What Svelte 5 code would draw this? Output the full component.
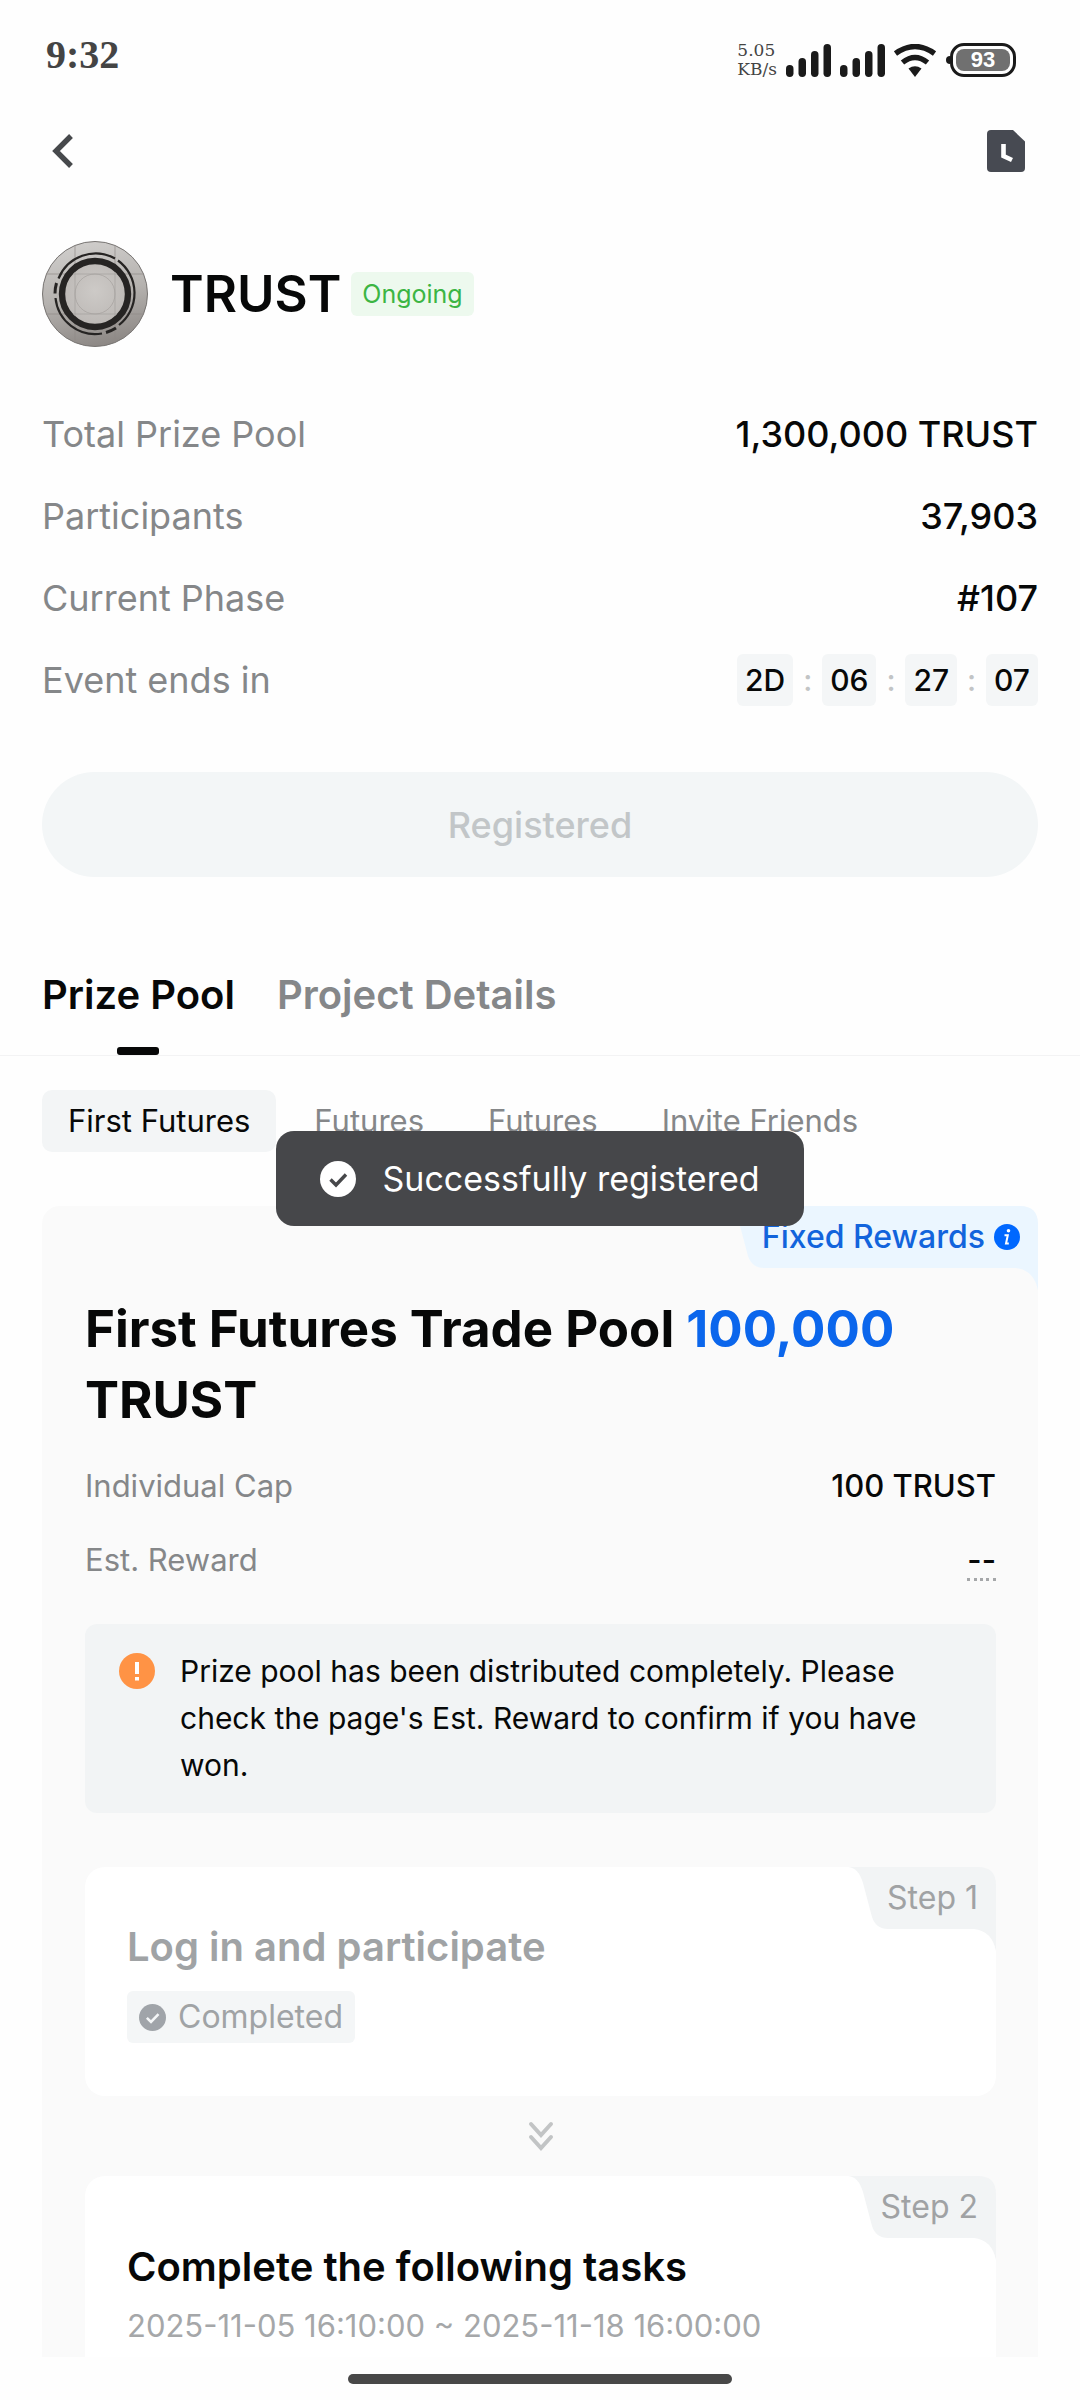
<script>
  let activeTab = $state('Prize Pool')
  let activePool = $state(0)

  const tabs = ['Prize Pool', 'Project Details']
  const pools = ['First Futures', 'Futures', 'Futures', 'Invite Friends']
  const stats = [
    { label: 'Total Prize Pool', value: '1,300,000 TRUST' },
    { label: 'Participants', value: '37,903' },
    { label: 'Current Phase', value: '#107' }
  ]
  const countdown = ['2D', '06', '27', '07']
  const bars = [12, 19, 26, 33]
</script>

{#snippet signal()}
  <svg class="signal" width="45" height="33" viewBox="0 0 45 33" aria-hidden="true">
    {#each bars as h, i}
      <rect x={i * 12.5} y={33 - h} width="7.5" height={h} rx="3.7" fill="#1a1a1a" />
    {/each}
  </svg>
{/snippet}

{#snippet check(size, disc, tick)}
  <svg width={size} height={size} viewBox="0 0 36 36" aria-hidden="true">
    <circle cx="18" cy="18" r="18" fill={disc} />
    <path d="M10.5 18.5 L16 24 L26 13.5" fill="none" stroke={tick} stroke-width="3.4" />
  </svg>
{/snippet}

<!-- notch in the top right corner of a card, w is the full width -->
{#snippet notch(w, fill)}
  <svg class="notch" width={w} height="84" viewBox="0 0 {w} 84" aria-hidden="true">
    <path
      d="M0 0 C8 1 12 6 15 16 L24 50 Q28 62 40 62 H{w - 22} Q{w - 4} 64 {w} 84 V18 Q{w} 0 {w - 18} 0 Z"
      {fill} />
  </svg>
{/snippet}

<div class="page">
  <div class="status-bar">
    <span class="time">9:32</span>
    <div class="indicators">
      <span class="speed">5.05<br />KB/s</span>
      {@render signal()}
      {@render signal()}
      <svg class="wifi" width="42" height="33" viewBox="0 0 42 33" aria-hidden="true">
        <g fill="none" stroke="#1a1a1a" stroke-width="5.4">
          <path d="M1.5 9.5 Q21 -4.5 40.5 9.5" />
          <path d="M8.5 18.5 Q21 8.5 33.5 18.5" />
        </g>
        <path d="M14.5 24.5 Q21 20 27.5 24.5 L21 33 Z" fill="#1a1a1a" />
      </svg>
      <div class="battery"><span>93</span></div>
    </div>
  </div>

  <header class="nav">
    <button class="icon-btn" aria-label="Back">
      <svg width="22" height="36" viewBox="0 0 22 36">
        <path d="M19 3 L4 18 L19 33" fill="none" stroke="#47494c" stroke-width="5.4" />
      </svg>
    </button>
    <button class="icon-btn" aria-label="History">
      <svg width="38" height="42" viewBox="0 0 38 42">
        <path d="M4 0 H26 L38 11.5 V38 Q38 42 34 42 H4 Q0 42 0 38 V4 Q0 0 4 0 Z" fill="#474a52" />
        <path d="M16.5 14 V26 L25 30" fill="none" stroke="#fff" stroke-width="4.6" />
      </svg>
    </button>
  </header>

  <main>
    <section class="project">
      <svg width="106" height="106" viewBox="0 0 106 106" aria-hidden="true">
        <defs>
          <linearGradient id="metal" x1="0.4" y1="0" x2="0.6" y2="1">
            <stop offset="0" stop-color="#cfcdcb" />
            <stop offset="0.5" stop-color="#b5b2af" />
            <stop offset="1" stop-color="#8b8683" />
          </linearGradient>
          <radialGradient id="face" cx="0.5" cy="0.45" r="0.6">
            <stop offset="0" stop-color="#cdcac7" />
            <stop offset="1" stop-color="#bab6b3" />
          </radialGradient>
        </defs>
        <circle cx="53" cy="53" r="52.5" fill="url(#metal)" stroke="#777472" />
        <g stroke="#8f8b88" stroke-width="0.7" fill="none">
          <path d="M33 4 V102 M73 4 V102 M4 33 H102 M4 73 H102" />
        </g>
        <circle cx="53" cy="53" r="33" fill="url(#face)" stroke="#262423" stroke-width="6.4" />
        <g stroke="#a5a19e" stroke-width="0.7" fill="none">
          <circle cx="53" cy="53" r="20" />
          <path d="M33 31 V75 M73 31 V75 M31 33 H75 M31 73 H75" />
        </g>
        <g fill="none" stroke="#262423" stroke-width="2.2">
          <path d="M16.5 37.5 A40 40 0 0 1 73 17.5" />
          <path d="M76 19.5 A40.5 40.5 0 0 1 77 84" />
          <path d="M13.5 57 A40 40 0 0 0 60 92.5" />
          <path d="M14.5 42 A40 40 0 0 0 13 52.5" stroke-width="3" />
          <path d="M64 91.5 A40 40 0 0 0 74 87" stroke-width="3" />
        </g>
      </svg>
      <h1>TRUST</h1>
      <span class="badge">Ongoing</span>
    </section>

    <dl class="stats">
      {#each stats as stat}
        <div class="row">
          <dt>{stat.label}</dt>
          <dd>{stat.value}</dd>
        </div>
      {/each}
      <div class="row">
        <dt>Event ends in</dt>
        <dd class="countdown">
          {#each countdown as part, i}
            {#if i > 0}<span class="colon">:</span>{/if}
            <span class="unit">{part}</span>
          {/each}
        </dd>
      </div>
    </dl>

    <button class="registered" disabled>Registered</button>
  </main>

  <nav class="tabs">
    {#each tabs as tab}
      <button class:active={activeTab === tab} onclick={() => (activeTab = tab)}>{tab}</button>
    {/each}
  </nav>

  <div class="pills">
    {#each pools as pool, i}
      <button class:active={activePool === i} onclick={() => (activePool = i)}>{pool}</button>
    {/each}
  </div>

  <section class="pool">
    {@render notch(314, '#ebf6ff')}
    <div class="corner fixed">
      <span>Fixed Rewards</span>
      <svg width="26" height="26" viewBox="0 0 26 26" aria-hidden="true">
        <circle cx="13" cy="13" r="13" fill="#0068ff" />
        <circle cx="14.5" cy="6.8" r="1.8" fill="#fff" />
        <path d="M10.5 11.2 H13.8 L12 19.5 H14.8" fill="none" stroke="#fff" stroke-width="2" />
      </svg>
    </div>

    <h2>First Futures Trade Pool <em>100,000</em> TRUST</h2>

    <dl class="details">
      <div class="row">
        <dt>Individual Cap</dt>
        <dd>100 TRUST</dd>
      </div>
      <div class="row">
        <dt>Est. Reward</dt>
        <dd><span class="hint">--</span></dd>
      </div>
    </dl>

    <div class="notice">
      <svg width="36" height="36" viewBox="0 0 36 36" aria-hidden="true">
        <circle cx="18" cy="18" r="18" fill="#ff9345" />
        <path d="M18 9 V21 M18 24 V27.5" stroke="#fff" stroke-width="4" />
      </svg>
      <p>Prize pool has been distributed completely. Please check the page's Est. Reward to confirm if you have won.</p>
    </div>

    <article class="step done">
      {@render notch(148, '#f2f4f5')}
      <span class="corner">Step 1</span>
      <h3>Log in and participate</h3>
      <span class="completed">
        {@render check(27, '#a0a4a9', '#f4f6f7')}
        Completed
      </span>
    </article>

    <svg class="arrows" width="28" height="30" viewBox="0 0 28 30" aria-hidden="true">
      <path
        d="M4 3 L14 14 L24 3 M4 16 L14 27 L24 16"
        fill="none"
        stroke="#c2c4c5"
        stroke-width="4"
        stroke-linecap="round" />
    </svg>

    <article class="step current">
      {@render notch(148, '#f2f4f5')}
      <span class="corner">Step 2</span>
      <h3>Complete the following tasks</h3>
      <time>2025-11-05 16:10:00 ~ 2025-11-18 16:00:00</time>
    </article>
  </section>

  <footer><div class="home-bar"></div></footer>

  <div class="toast" role="status">
    {@render check(36, '#fff', '#46474a')}
    Successfully registered
  </div>
</div>

<style>
  :global(body) {
    background: #fff;
  }

  .page {
    position: relative;
    font-family: Inter, 'Liberation Sans', sans-serif;
    font-size: 31px;
    color: #070808;
    background: #fefefe;
  }

  h1, h2, h3, p, dl, dd {
    margin: 0;
  }

  button {
    font: inherit;
    color: inherit;
    background: none;
    border: 0;
    padding: 0;
    cursor: pointer;
  }

  svg {
    flex: none;
    display: block;
  }

  .status-bar {
    height: 104px;
    padding: 0 64px 0 46px;
    box-sizing: border-box;
    display: flex;
    justify-content: space-between;
    align-items: center;
  }

  .time {
    font: bold 40px 'Liberation Serif', serif;
    color: #444;
    padding-top: 4px;
  }

  .indicators {
    display: flex;
    align-items: center;
    gap: 9px;
    padding-top: 16px;
  }

  .speed {
    font: 17px/19px 'DejaVu Serif', serif;
    color: #444;
  }

  .battery {
    position: relative;
    box-sizing: border-box;
    width: 66px;
    height: 34px;
    margin-left: 5px;
    padding: 3px;
    border: 3px solid #1a1a1a;
    border-radius: 14px;
  }

  .battery::before {
    content: '';
    position: absolute;
    left: -7px;
    top: 10px;
    width: 4px;
    height: 8px;
    border-radius: 4px 0 0 4px;
    background: #1a1a1a;
  }

  .battery span {
    display: block;
    border-radius: 8px;
    background: #707070;
    color: #fff;
    font: bold 22px/22px 'Liberation Sans', sans-serif;
    text-align: center;
  }

  .nav {
    height: 94px;
    padding: 0 55px 0 52px;
    display: flex;
    justify-content: space-between;
    align-items: center;
  }

  main {
    padding: 43px 42px 0;
  }

  .project {
    display: flex;
    align-items: center;
  }

  h1 {
    margin-left: 22px;
    font-size: 51px;
    font-weight: 600;
    line-height: 60px;
  }

  .badge {
    margin-left: 10px;
    padding: 0 11px;
    border-radius: 6px;
    background: #edf9ee;
    color: #3cb544;
    font-size: 25px;
    line-height: 44px;
  }

  .row {
    display: flex;
    justify-content: space-between;
    align-items: center;
  }

  dt {
    color: #858789;
  }

  dd {
    font-weight: 500;
  }

  .stats {
    margin-top: 61px;
    display: grid;
    gap: 30px;
    font-size: 36px;
    line-height: 52px;
  }

  .countdown {
    display: flex;
    font-size: 30px;
  }

  .unit {
    padding: 0 8px;
    border-radius: 6px;
    background: #f4f6f7;
  }

  .colon {
    width: 29px;
    text-align: center;
    color: #c2c4c5;
  }

  .registered {
    display: block;
    width: 100%;
    height: 105px;
    margin-top: 66px;
    border-radius: 53px;
    background: #f3f6f7;
    color: #c2c6c8;
    font-size: 36px;
    font-weight: 500;
  }

  .tabs {
    margin-top: 94px;
    padding: 0 42px;
    display: flex;
    gap: 42px;
    border-bottom: 1px solid #f3f3f4;
    font-size: 40px;
    font-weight: 600;
    line-height: 48px;
    color: #858789;
  }

  .tabs button {
    position: relative;
    padding-bottom: 36px;
  }

  .tabs .active {
    color: #070808;
  }

  .tabs .active::after {
    content: '';
    position: absolute;
    left: calc(50% - 21px);
    bottom: 0;
    width: 42px;
    height: 8px;
    border-radius: 3px;
    background: #070808;
  }

  .pills {
    margin-top: 34px;
    padding: 0 42px;
    display: flex;
    gap: 12px;
    line-height: 62px;
    color: #858789;
  }

  .pills button {
    padding: 0 26px;
    border-radius: 10px;
  }

  .pills .active {
    background: #f3f5f6;
    color: #070808;
  }

  .pool {
    position: relative;
    margin: 54px 42px 0;
    padding: 87px 42px 0 43px;
    border-radius: 18px 18px 0 0;
    background: #fafafa;
  }

  .notch {
    position: absolute;
    top: 0;
    right: 0;
  }

  .corner {
    position: absolute;
    top: 0;
    right: 18px;
    font-size: 32px;
    line-height: 62px;
    color: #a0a2a4;
  }

  .corner.fixed {
    display: flex;
    align-items: center;
    gap: 9px;
    color: #1264dc;
    font-weight: 500;
  }

  h2 {
    font-size: 51px;
    font-weight: 700;
    line-height: 71px;
  }

  em {
    font-style: normal;
    color: #0b66ec;
  }

  .details {
    margin-top: 29px;
    display: grid;
    gap: 30px;
    line-height: 44px;
  }

  .hint {
    border-bottom: 3px dotted #a5a7a9;
  }

  .notice {
    margin-top: 42px;
    padding: 24px 36px 24px 34px;
    display: flex;
    gap: 25px;
    border-radius: 12px;
    background: #f2f4f5;
    font-size: 30px;
    line-height: 47px;
  }

  .notice svg {
    margin-top: 5px;
  }

  .step {
    position: relative;
    padding: 56px 42px 53px;
    border-radius: 20px;
    background: #fff;
  }

  .done {
    margin-top: 54px;
    color: #a0a3a5;
  }

  h3 {
    font-size: 40px;
    font-weight: 600;
    line-height: 48px;
  }

  .completed {
    width: fit-content;
    margin-top: 20px;
    padding: 0 12px;
    display: flex;
    align-items: center;
    gap: 12px;
    border-radius: 6px;
    background: #f4f6f7;
    font-size: 32px;
    line-height: 52px;
  }

  .arrows {
    margin: 25px auto;
  }

  .current {
    padding: 67px 42px 9px;
    border-radius: 20px 20px 0 0;
  }

  time {
    display: block;
    margin-top: 13px;
    color: #a5a7a9;
    line-height: 44px;
  }

  footer {
    height: 43px;
    display: flex;
    justify-content: center;
    align-items: center;
  }

  .home-bar {
    width: 384px;
    height: 10px;
    border-radius: 5px;
    background: #484848;
  }

  .toast {
    position: absolute;
    top: 1131px;
    left: 0;
    right: 0;
    width: fit-content;
    margin: 0 auto;
    padding: 0 44px;
    display: flex;
    align-items: center;
    gap: 26px;
    border-radius: 18px;
    background: #46474a;
    color: #fff;
    font-size: 34px;
    line-height: 95px;
  }
</style>
